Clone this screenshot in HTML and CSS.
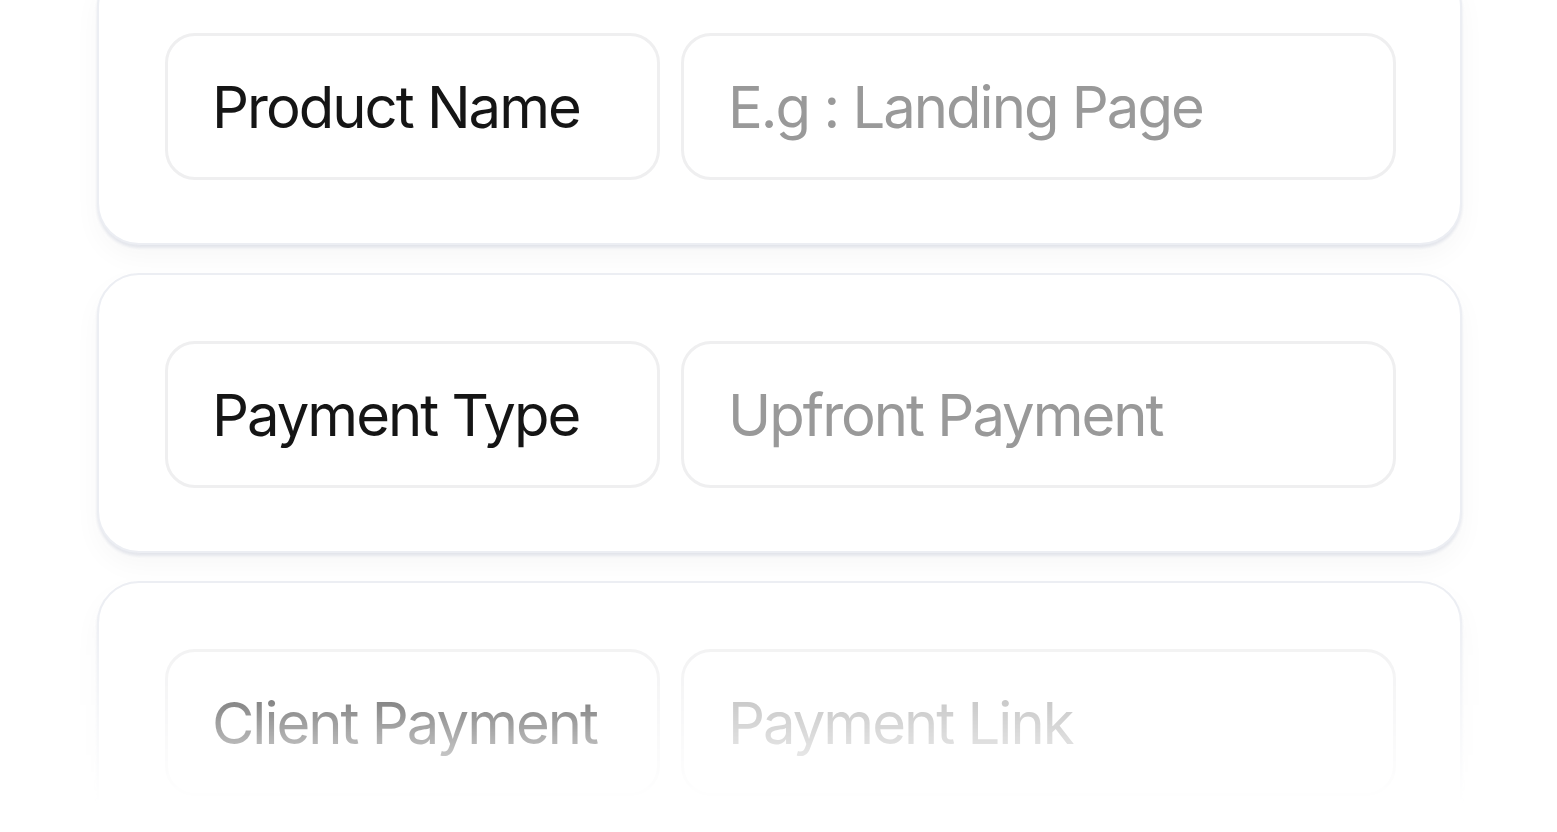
FILE: index.html
```html
<!DOCTYPE html>
<html lang="en">
<head>
    <meta charset="UTF-8">
    <meta name="viewport" content="width=device-width, initial-scale=1.0">
    <title>Product Details</title>
    <link rel="stylesheet" href="styles.css">
</head>
<body>
    <main class="form-stack">
        <section class="field-card">
            <div class="field-label">Product Name</div>
            <div class="field-value">E.g : Landing Page</div>
        </section>

        <section class="field-card">
            <div class="field-label">Payment Type</div>
            <div class="field-value">Upfront Payment</div>
        </section>

        <section class="field-card">
            <div class="field-label">Client Payment</div>
            <div class="field-value">Payment Link</div>
        </section>
    </main>
</body>
</html>
```

FILE: styles.css
```css
html, body {
    margin: 0;
    padding: 0;
    background-color: #ffffff;
}

body {
    font-family: 'Inter', 'Noto Sans', sans-serif;
    height: 832px;
    overflow: hidden;
}

.form-stack {
    display: flex;
    flex-direction: column;
    gap: 28px;
    padding: 0 95px 0 97px;
    margin-top: -35px;
    height: 867px;
    -webkit-mask-image: linear-gradient(to bottom, #000 640px, transparent 840px);
    mask-image: linear-gradient(to bottom, #000 640px, transparent 840px);
}

.field-card {
    display: flex;
    gap: 21px;
    padding: 66px 64px 63px 66px;
    background-color: #ffffff;
    border: 2px solid #eceef3;
    border-radius: 42px;
    box-shadow: 0 3px 3px rgba(210, 214, 224, 0.55), 0 12px 28px rgba(0, 0, 0, 0.035);
}

.field-label, .field-value {
    box-sizing: border-box;
    height: 147px;
    display: flex;
    align-items: center;
    padding: 0 44px;
    border: 3px solid #efeff0;
    border-radius: 30px;
    font-size: 58px;
    letter-spacing: -2px;
    white-space: nowrap;
}

.field-label {
    width: 495px;
    flex-shrink: 0;
    color: #151515;
}

.field-value {
    flex: 1;
    color: #999999;
}
```
